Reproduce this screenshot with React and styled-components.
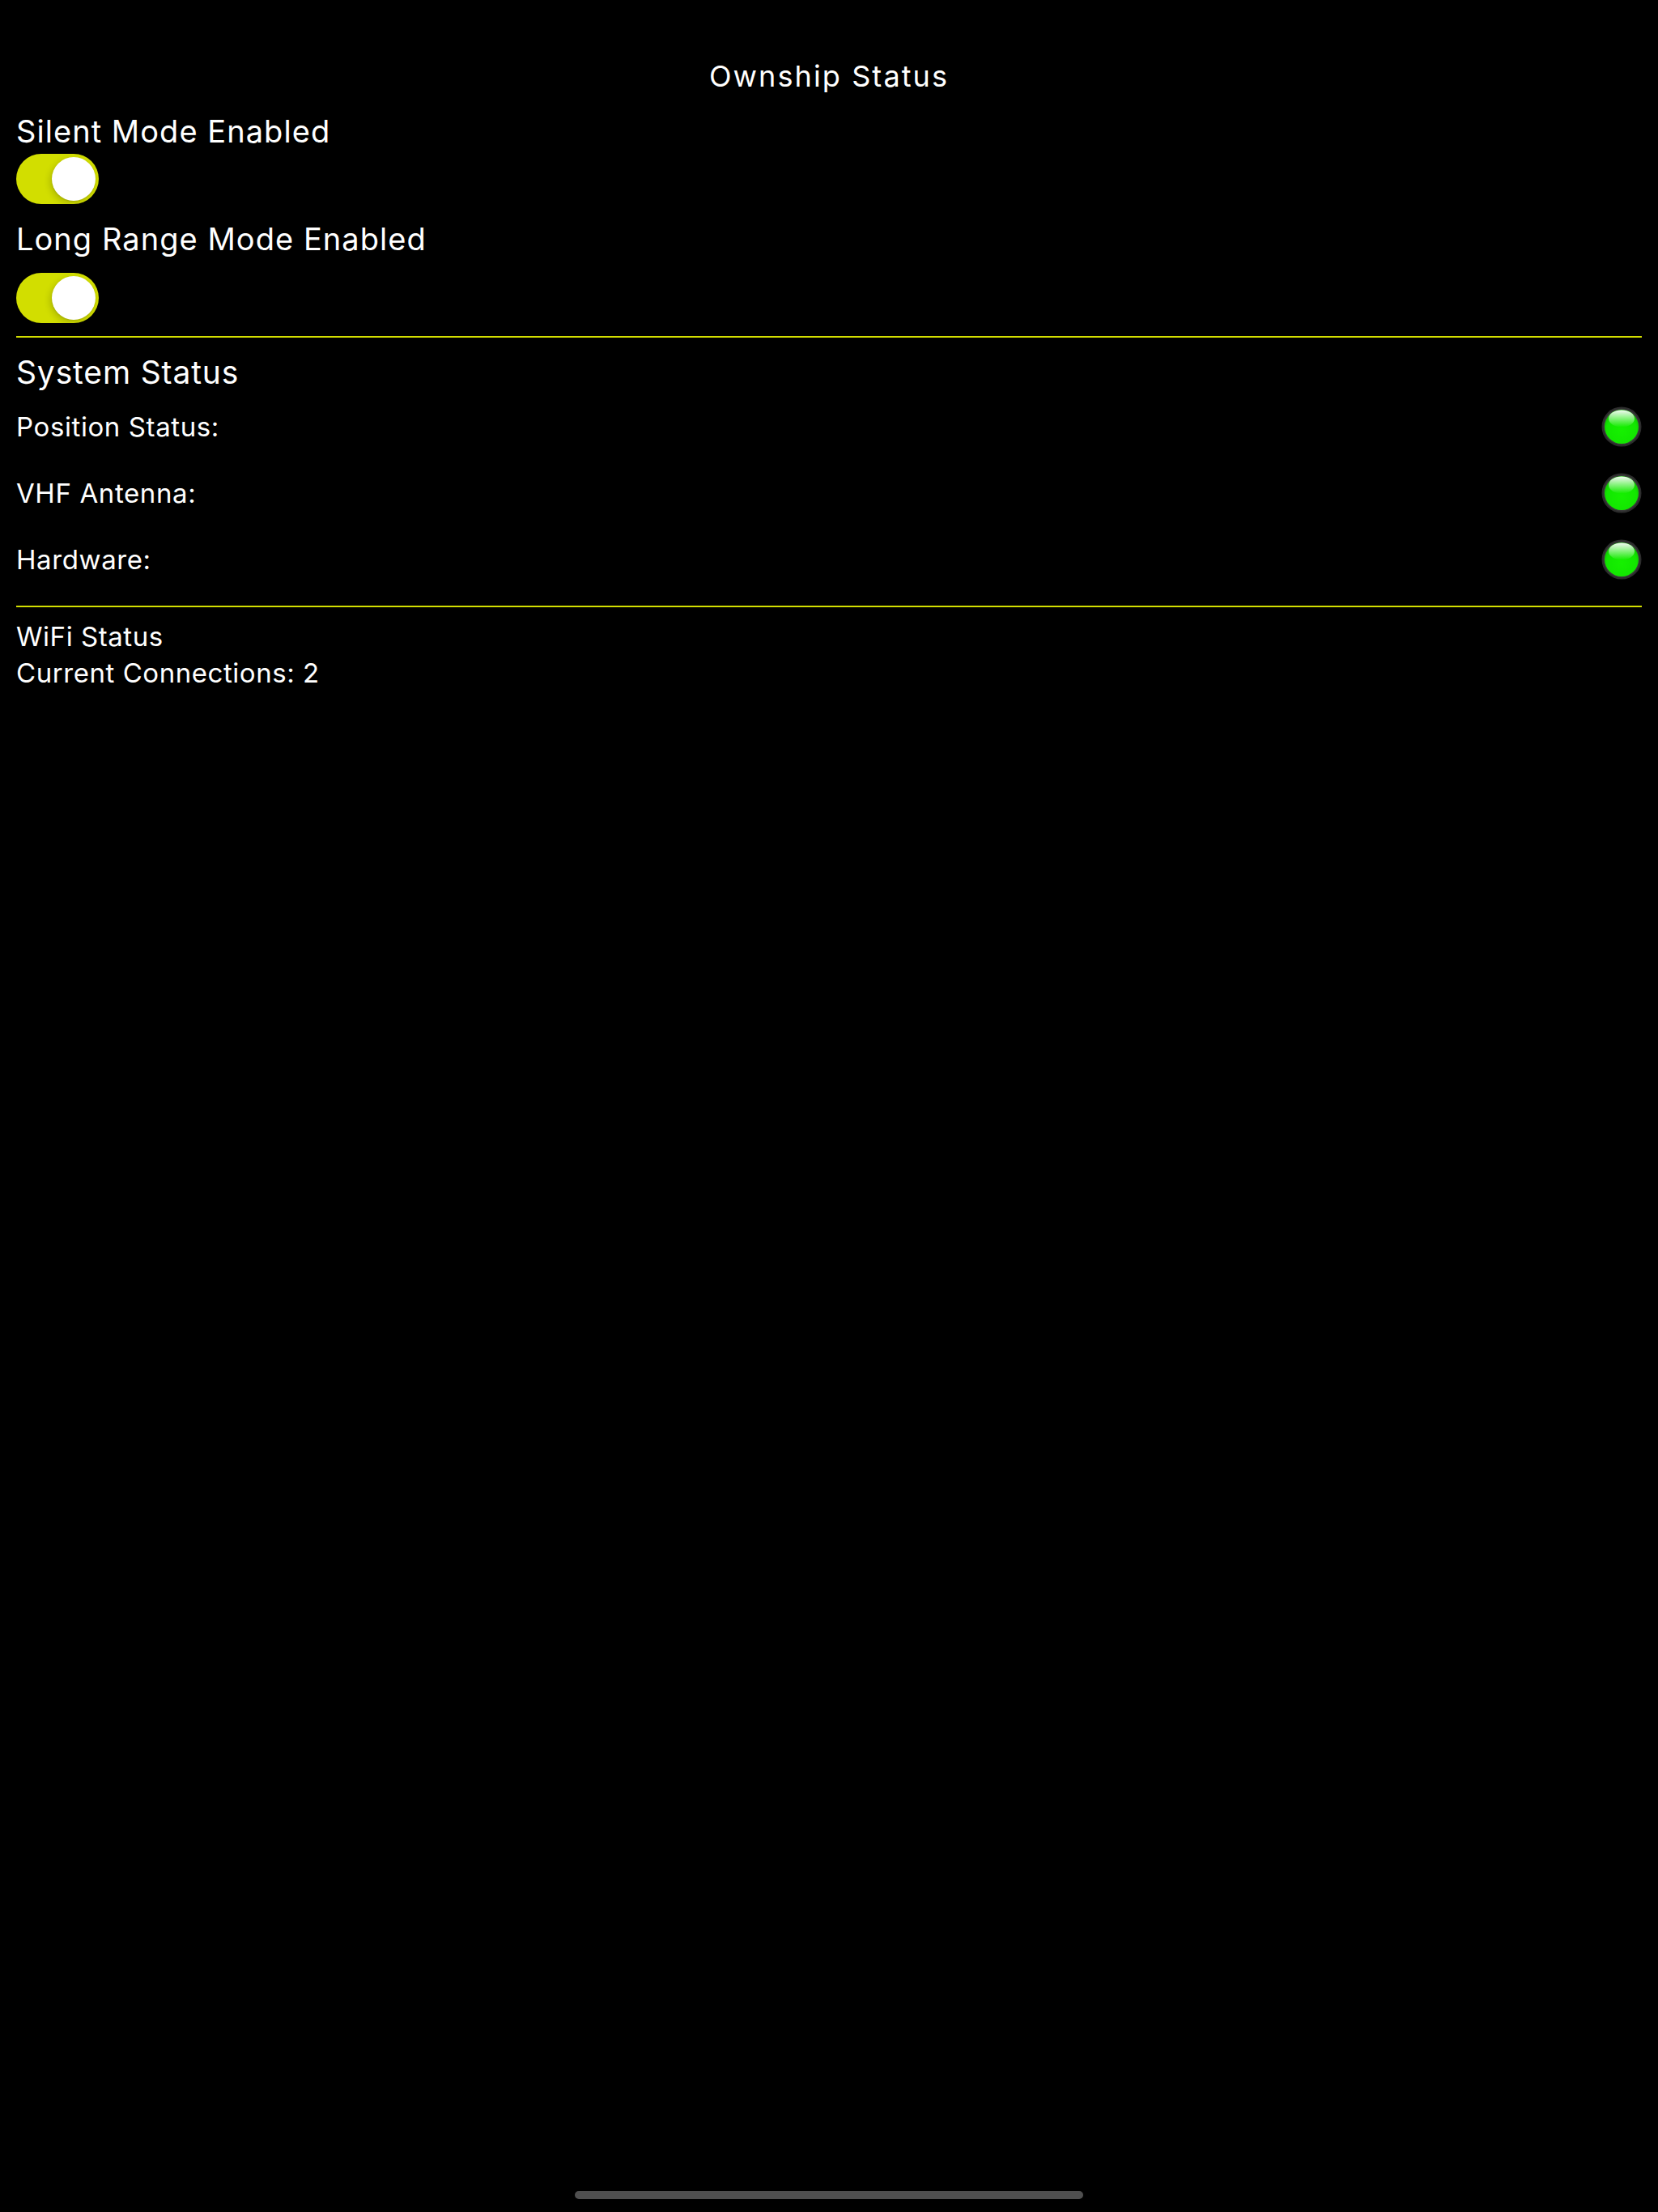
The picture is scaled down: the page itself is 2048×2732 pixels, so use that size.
import React from 'react'
import styled, { createGlobalStyle } from 'styled-components'

const GlobalStyle = createGlobalStyle`
    html, body {
        margin: 0;
        padding: 0;
        background: #000;
    }
    body {
        font-family: Inter, "Noto Sans", sans-serif;
        color: #fff;
    }
`

const ACCENT = '#d2de00'

const statuses = [
    { label: 'Position Status:', ok: true },
    { label: 'VHF Antenna:', ok: true },
    { label: 'Hardware:', ok: true },
]

function App() {
    return (
        <Page>
            <GlobalStyle />
            <Content>
                <Title>Ownship Status</Title>

                <ModeLabel>Silent Mode Enabled</ModeLabel>
                <Toggle on />

                <ModeLabel spaced>Long Range Mode Enabled</ModeLabel>
                <Toggle on />

                <Divider />

                <SectionTitle>System Status</SectionTitle>
                {statuses.map(s => (
                    <StatusRow key={s.label}>
                        <StatusLabel>{s.label}</StatusLabel>
                        <StatusLight ok={s.ok} />
                    </StatusRow>
                ))}

                <Divider />

                <WifiBlock>
                    <div>WiFi Status</div>
                    <div>Current Connections: 2</div>
                </WifiBlock>
            </Content>
            <HomeBar />
        </Page>
    )
}

function Toggle({ on }) {
    return (
        <Track on={on}>
            <Knob />
        </Track>
    )
}

function StatusLight({ ok }) {
    const id = ok ? 'ok' : 'bad'
    return (
        <Light>
            <svg width="50" height="50" viewBox="0 0 50 50">
                <defs>
                    <radialGradient id={`fill-${id}`} cx="50%" cy="60%" r="55%">
                        <stop offset="0%" stopColor={ok ? '#16f000' : '#f01010'} />
                        <stop offset="80%" stopColor={ok ? '#12e600' : '#e00000'} />
                        <stop offset="100%" stopColor={ok ? '#0fc800' : '#c00000'} />
                    </radialGradient>
                    <linearGradient id={`gloss-${id}`} x1="0" y1="0" x2="0" y2="1">
                        <stop offset="0%" stopColor="#ffffff" stopOpacity="0.95" />
                        <stop offset="100%" stopColor="#ffffff" stopOpacity="0" />
                    </linearGradient>
                </defs>
                <circle cx="25" cy="25" r="24.5" fill="#2c2c2c" />
                <circle cx="25" cy="25" r="22.5" fill="#3a3a3a" />
                <circle cx="25" cy="25" r="21" fill={`url(#fill-${id})`} />
                <ellipse cx="25" cy="15" rx="16" ry="10.5" fill={`url(#gloss-${id})`} />
            </svg>
        </Light>
    )
}

const Page = styled.div`
    min-height: 100vh;
    display: flex;
    flex-direction: column;
    background: #000;
`

const Content = styled.div`
    display: flex;
    flex-direction: column;
    align-items: flex-start;
    padding: 72px 20px 0;
`

const Title = styled.div`
    align-self: stretch;
    text-align: center;
    font-size: 36px;
    line-height: 44px;
    letter-spacing: 2.1px;
`

const ModeLabel = styled.div`
    font-size: 38px;
    line-height: 46px;
    letter-spacing: 1.05px;
    margin-top: ${p => (p.spaced ? '20px' : '23px')};
    margin-bottom: ${p => (p.spaced ? '19px' : '5px')};
`

const Track = styled.div`
    width: 102px;
    height: 62px;
    border-radius: 31px;
    background: ${p => (p.on ? ACCENT : '#39393d')};
    display: flex;
    align-items: center;
    justify-content: ${p => (p.on ? 'flex-end' : 'flex-start')};
    padding: 0 4px;
    box-sizing: border-box;
`

const Knob = styled.div`
    width: 54px;
    height: 54px;
    border-radius: 50%;
    background: #fff;
    box-shadow: -2px 3px 8px rgba(0, 0, 0, 0.18), 0 1px 2px rgba(0, 0, 0, 0.1);
`

const Divider = styled.div`
    align-self: stretch;
    height: 2px;
    background: ${ACCENT};
    margin-top: 16px;
`

const SectionTitle = styled.div`
    font-size: 39px;
    line-height: 48px;
    letter-spacing: 0.85px;
    margin-top: 19px;
    margin-bottom: 2px;
`

const StatusRow = styled.div`
    align-self: stretch;
    height: 82px;
    display: flex;
    align-items: center;
    justify-content: space-between;
`

const StatusLabel = styled.div`
    font-size: 33px;
    line-height: 40px;
    letter-spacing: 0.6px;
`

const Light = styled.div`
    width: 50px;
    height: 50px;
    svg {
        display: block;
    }
`

const WifiBlock = styled.div`
    font-size: 33px;
    line-height: 45px;
    letter-spacing: 0.55px;
    margin-top: 14px;
`

const HomeBar = styled.div`
    margin: auto auto 16px;
    width: 628px;
    height: 10px;
    border-radius: 5px;
    background: #4f4f4f;
`

export default App
